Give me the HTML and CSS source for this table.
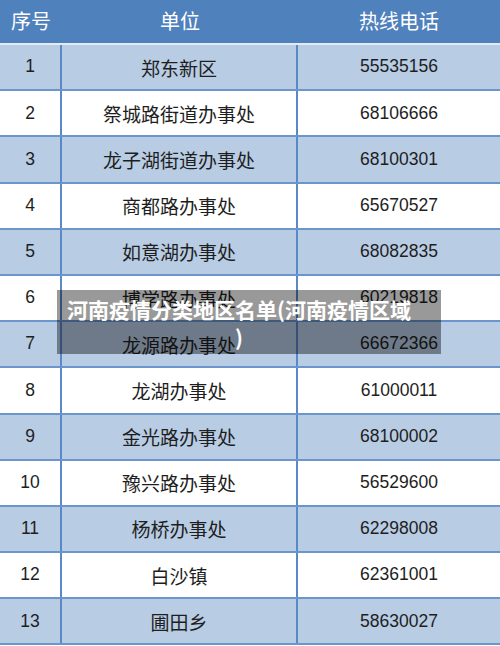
FILE: index.html
```html
<!DOCTYPE html>
<html lang="zh-CN">
<head>
<meta charset="utf-8">
<link rel="stylesheet" href="styles.css">
</head>
<body>
<div class="page">
  <div class="table">
    <div class="row head">
      <div class="cell">序号</div>
      <div class="cell">单位</div>
      <div class="cell">热线电话</div>
    </div>
    <div class="row odd"><div class="cell num">1</div><div class="cell">郑东新区</div><div class="cell num">55535156</div></div>
    <div class="row"><div class="cell num">2</div><div class="cell">祭城路街道办事处</div><div class="cell num">68106666</div></div>
    <div class="row odd"><div class="cell num">3</div><div class="cell">龙子湖街道办事处</div><div class="cell num">68100301</div></div>
    <div class="row"><div class="cell num">4</div><div class="cell">商都路办事处</div><div class="cell num">65670527</div></div>
    <div class="row odd"><div class="cell num">5</div><div class="cell">如意湖办事处</div><div class="cell num">68082835</div></div>
    <div class="row"><div class="cell num">6</div><div class="cell">博学路办事处</div><div class="cell num">60219818</div></div>
    <div class="row odd"><div class="cell num">7</div><div class="cell">龙源路办事处</div><div class="cell num">66672366</div></div>
    <div class="row"><div class="cell num">8</div><div class="cell">龙湖办事处</div><div class="cell num">61000011</div></div>
    <div class="row odd"><div class="cell num">9</div><div class="cell">金光路办事处</div><div class="cell num">68100002</div></div>
    <div class="row"><div class="cell num">10</div><div class="cell">豫兴路办事处</div><div class="cell num">56529600</div></div>
    <div class="row odd"><div class="cell num">11</div><div class="cell">杨桥办事处</div><div class="cell num">62298008</div></div>
    <div class="row"><div class="cell num">12</div><div class="cell">白沙镇</div><div class="cell num">62361001</div></div>
    <div class="row odd"><div class="cell num">13</div><div class="cell">圃田乡</div><div class="cell num">58630027</div></div>
  </div>
  <div class="caption">河南疫情分类地区名单(河南疫情区域<br>)</div>
</div>
</body>
</html>
```
FILE: styles.css
```css
html, body {
  margin: 0;
  padding: 0;
  background: #ffffff;
}
.page {
  position: relative;
  width: 500px;
  height: 646px;
  overflow: hidden;
  font-family: "Noto Sans CJK SC", "Noto Sans", sans-serif;
}
.table {
  display: flex;
  flex-direction: column;
}
.row {
  display: grid;
  grid-template-columns: 62px 236px 1fr;
  height: 46.2px;
  box-sizing: border-box;
  border-bottom: 2px solid #6a95cd;
  background: #ffffff;
  color: #1e1e1e;
}
.row.odd {
  background: #b8cce4;
}
.row.head {
  height: 45px;
  background: #4f81bd;
  border-bottom: 2px solid #e4ebf5;
  color: #ffffff;
}
.cell {
  display: flex;
  align-items: center;
  justify-content: center;
  font-size: 19px;
  box-sizing: border-box;
  border-right: 2px solid #5b88c6;
  line-height: 1;
}
.cell:last-child {
  border-right: none;
}
.row.head .cell {
  border-right: none;
  font-size: 20px;
  padding-bottom: 2px;
}
.cell.num {
  font-family: "Liberation Sans", "Noto Sans", sans-serif;
  font-size: 17.5px;
}
.caption {
  position: absolute;
  left: 57px;
  top: 290px;
  width: 384px;
  height: 64px;
  box-sizing: border-box;
  padding: 5px 30px 0 10px;
  background: rgba(0, 0, 0, 0.4);
  color: #ffffff;
  font-family: "Noto Sans CJK SC", sans-serif;
  font-weight: 700;
  font-size: 21px;
  line-height: 28px;
  text-align: center;
  white-space: nowrap;
}
```
